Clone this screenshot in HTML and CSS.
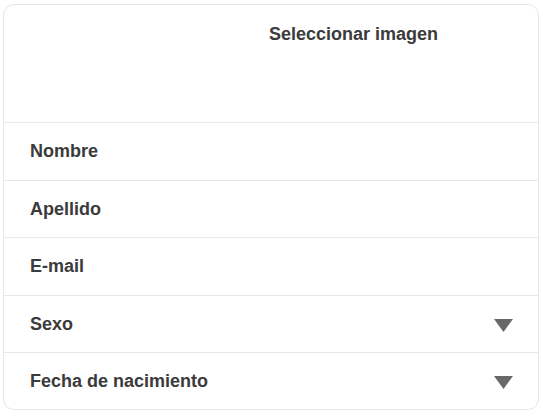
FILE: index.html
```html
<!DOCTYPE html>
<html lang="es">
<head>
<meta charset="utf-8">
<title>Formulario</title>
<link rel="stylesheet" href="styles.css">
</head>
<body>
<div class="card">
  <div class="header">
    <span class="select">Seleccionar imagen</span>
  </div>
  <div class="row"><span class="label">Nombre</span></div>
  <div class="row"><span class="label">Apellido</span></div>
  <div class="row"><span class="label">E-mail</span></div>
  <div class="row"><span class="label">Sexo</span>
    <svg class="caret" width="19" height="13" viewBox="0 0 19 13"><polygon points="0,0 19,0 9.5,13" fill="#686868"/></svg>
  </div>
  <div class="row"><span class="label">Fecha de nacimiento</span>
    <svg class="caret" width="19" height="13" viewBox="0 0 19 13"><polygon points="0,0 19,0 9.5,13" fill="#686868"/></svg>
  </div>
</div>
</body>
</html>
```
FILE: styles.css
```css
html, body {
  margin: 0;
  padding: 0;
  background: #ffffff;
}
body {
  font-family: "Liberation Sans", Arial, sans-serif;
  color: #3b3b3b;
}
.card {
  box-sizing: border-box;
  margin: 4px 0 0 3px;
  width: 536px;
  height: 406px;
  border: 1px solid #e6e6e6;
  border-radius: 11px;
  overflow: hidden;
  display: flex;
  flex-direction: column;
}
.header {
  box-sizing: border-box;
  height: 117px;
  flex: none;
  padding: 18px 0 0 265px;
}
.select {
  font-size: 18px;
  line-height: 22px;
  font-weight: bold;
  color: #3b3b3b;
}
.row {
  box-sizing: border-box;
  height: 57.5px;
  flex: none;
  border-top: 1px solid #e8e8e8;
  display: flex;
  align-items: center;
  justify-content: space-between;
  padding: 0 25px 0 26px;
}
.label {
  font-size: 18px;
  line-height: 22px;
  font-weight: bold;
  color: #3b3b3b;
}
.caret {
  display: block;
  margin-top: 3px;
}
```
